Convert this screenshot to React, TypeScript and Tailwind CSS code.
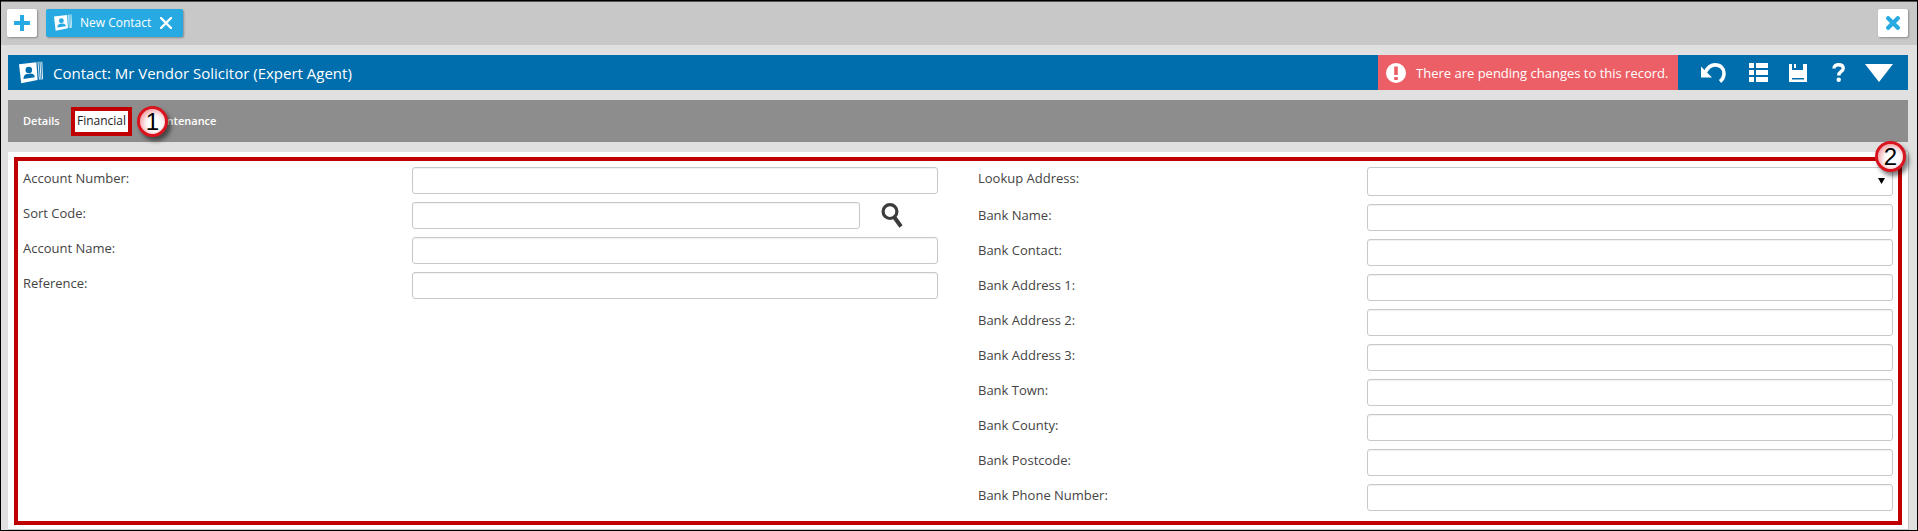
import React from 'react'

const leftFields = [
    { id: 'accountNumber', label: 'Account Number:' },
    { id: 'sortCode', label: 'Sort Code:', lookup: true },
    { id: 'accountName', label: 'Account Name:' },
    { id: 'reference', label: 'Reference:' },
]

const bankFields = [
    { id: 'bankName', label: 'Bank Name:' },
    { id: 'bankContact', label: 'Bank Contact:' },
    { id: 'bankAddress1', label: 'Bank Address 1:' },
    { id: 'bankAddress2', label: 'Bank Address 2:' },
    { id: 'bankAddress3', label: 'Bank Address 3:' },
    { id: 'bankTown', label: 'Bank Town:' },
    { id: 'bankCounty', label: 'Bank County:' },
    { id: 'bankPostcode', label: 'Bank Postcode:' },
    { id: 'bankPhone', label: 'Bank Phone Number:' },
]

const labelClass = 'w-[389px] shrink-0 pt-0.5'
const inputClass = 'h-[27px] min-w-0 flex-1 rounded-[3px] border border-[#c8c8c8] bg-white px-2 shadow-[inset_0_1px_1px_rgba(0,0,0,0.06)] focus:outline-none'

const ContactIcon: React.FC<{ className?: string }> = ({ className }) => (
    <svg viewBox="0 0 24 24" className={className} aria-hidden="true">
        <path d="M0 3.2 L17.4 1.2 L18.6 19 L2.2 22.2 Z" fill="#fff" />
        <path d="M19 0.8 L20.4 18.6 M21 0.6 L22 18.8 M22.8 0.8 L23.6 18.4" stroke="#fff" strokeWidth="0.9" fill="none" />
        <circle cx="9.8" cy="9" r="3.3" fill="currentColor" />
        <path d="M4.6 18 C4.4 14.5 6.2 13 8.6 13 L11.6 12.6 C14 12.6 15.6 14 15.8 16.2 Z" fill="currentColor" />
    </svg>
)

const Callout: React.FC<{ value: number }> = ({ value }) => (
    <span className="flex size-[31px] items-center justify-center rounded-full border-[3px] border-[#d9141e] bg-white font-['Liberation_Sans',sans-serif] text-2xl leading-none text-black shadow-[inset_2px_2px_6px_rgba(217,20,30,0.45),3px_4px_4px_rgba(0,0,0,0.5)]">
        {value}
    </span>
)

const App: React.FC = () => {
    return (
        <div className="border border-black bg-[#e0e0e0] font-['Open_Sans','Noto_Sans',sans-serif] text-[13px] leading-[18px] text-[#444]">
            <header className="flex items-center justify-between border-t border-[#555] bg-[#c8c8c8] pt-[7px] pr-[9px] pb-2 pl-1.5">
                <div className="flex items-center gap-[9px]">
                    <button type="button" aria-label="Add" className="flex h-7 w-[30px] items-center justify-center rounded-[2px] bg-white shadow-[1px_1px_2px_rgba(0,0,0,0.3)]">
                        <svg viewBox="0 0 16 16" className="size-4" aria-hidden="true">
                            <path d="M8 0 V16 M0 8 H16" stroke="#27aae1" strokeWidth="4" />
                        </svg>
                    </button>
                    <div className="flex h-7 w-[137px] items-center rounded-[2px] bg-[#27aae1] pl-2 text-white shadow-[1px_1px_2px_rgba(0,0,0,0.3)]">
                        <ContactIcon className="mr-2 size-[18px] text-[#27aae1]" />
                        <span className="flex-1 text-xs font-medium">New Contact</span>
                        <button type="button" aria-label="Close tab" className="mr-[11px]">
                            <svg viewBox="0 0 12 12" className="size-3" aria-hidden="true">
                                <path d="M1 1 L11 11 M11 1 L1 11" stroke="#fff" strokeWidth="2.4" strokeLinecap="round" />
                            </svg>
                        </button>
                    </div>
                </div>
                <button type="button" aria-label="Close" className="flex h-7 w-[30px] items-center justify-center rounded-[2px] bg-white shadow-[1px_1px_2px_rgba(0,0,0,0.3)]">
                    <svg viewBox="0 0 14 14" className="size-3.5" aria-hidden="true">
                        <path d="M2.2 2.2 L11.8 11.8 M11.8 2.2 L2.2 11.8" stroke="#27aae1" strokeWidth="4.2" strokeLinecap="round" />
                    </svg>
                </button>
            </header>

            <main className="flex flex-col gap-2.5 pt-2.5 pr-[9px] pl-[7px]">
                <div className="flex h-[35px] items-stretch bg-[#006dad] text-white">
                    <div className="flex flex-1 items-center pl-[11px]">
                        <ContactIcon className="mr-2.5 size-6 text-[#006dad]" />
                        <h1 className="text-[15px]">Contact: Mr Vendor Solicitor (Expert Agent)</h1>
                    </div>
                    <div className="flex w-[300px] items-center bg-[#ec5f66] pl-2">
                        <svg viewBox="0 0 20 20" className="mr-2.5 size-5" aria-hidden="true">
                            <circle cx="10" cy="10" r="10" fill="#fff" />
                            <path d="M8.2 3.5 H11.8 V12 H8.2 Z M8.2 14 H11.8 V17 H8.2 Z" fill="#ec5f66" />
                        </svg>
                        <span>There are pending changes to this record.</span>
                    </div>
                    <div className="flex w-[230px] items-center pl-[23px]">
                        <button type="button" aria-label="Undo" className="mr-[23px]">
                            <svg viewBox="0 0 25 20" className="h-5 w-[25px]" aria-hidden="true">
                                <path d="M0 3.5 L0 14.5 L11 14.5 Z" fill="#fff" />
                                <path d="M4.5 9 C7.5 3 11 1.9 14 1.9 C19.5 1.9 23 5.5 23 10.2 C23 14 21.5 16.5 19 18.5" fill="none" stroke="#fff" strokeWidth="3.6" />
                            </svg>
                        </button>
                        <button type="button" aria-label="List" className="mr-[21px]">
                            <svg viewBox="0 0 19 19" className="size-[19px]" aria-hidden="true">
                                <path d="M0 0 H5 V5 H0 Z M7 0 H19 V5 H7 Z M0 7 H5 V12 H0 Z M7 7 H19 V12 H7 Z M0 14 H5 V19 H0 Z M7 14 H19 V19 H7 Z" fill="#fff" />
                            </svg>
                        </button>
                        <button type="button" aria-label="Save" className="mr-[25px]">
                            <svg viewBox="0 0 18 18" className="size-[18px]" aria-hidden="true">
                                <path d="M0 0 H3 V6 H14 V0 H18 V18 H0 Z M5 0 H7 V4 H5 Z M3 14 V15.5 H15 V14 Z" fill="#fff" fillRule="evenodd" />
                            </svg>
                        </button>
                        <button type="button" aria-label="Help" className="mr-[20px]">
                            <svg viewBox="0 0 13 19" className="h-[19px] w-[13px]" aria-hidden="true">
                                <path d="M2 5.5 C2 3 4 1.8 6.5 1.8 C9.5 1.8 11.2 3.2 11.2 5.4 C11.2 8.6 6.8 8.2 6.8 12.4" fill="none" stroke="#fff" strokeWidth="3.4" />
                                <circle cx="6.7" cy="16.8" r="2.2" fill="#fff" />
                            </svg>
                        </button>
                        <button type="button" aria-label="More">
                            <svg viewBox="0 0 28 18" className="h-[18px] w-7" aria-hidden="true">
                                <path d="M0 0 H28 L14 18 Z" fill="#fff" />
                            </svg>
                        </button>
                    </div>
                </div>

                <nav className="flex h-[42px] items-center bg-[#8d8d8d] pl-[15px] text-xs text-white">
                    <a href="#details" className="w-12 text-[11px] font-semibold">Details</a>
                    <a href="#financial" className="flex h-[29px] w-[61px] items-center justify-center border-4 border-[#c00000] bg-white text-[#222]">Financial</a>
                    <div className="relative ml-[15px]">
                        <a href="#maintenance" className="text-[11px] font-semibold">Maintenance</a>
                        <div className="absolute -top-[7px] -left-[10px]">
                            <Callout value={1} />
                        </div>
                    </div>
                </nav>

                <section className="relative border-b border-[#c8c8c8] bg-white pt-[5px] pr-1.5 pb-1 pl-1.5 shadow-[1px_0_0_#c0c0c0]">
                    <form className="grid grid-cols-2 gap-10 border-4 border-[#c00000] pt-1.5 pr-[5px] pb-2.5 pl-[5px]">
                        <div className="flex flex-col gap-2">
                            {leftFields.map((field) => (
                                <div key={field.id} className="flex">
                                    <label htmlFor={field.id} className={labelClass}>{field.label}</label>
                                    <input type="text" id={field.id} name={field.id} className={inputClass} />
                                    {field.lookup && (
                                        <button type="button" aria-label="Search sort code" className="flex w-[78px] items-center pl-[21px]">
                                            <svg viewBox="0 0 22 25" className="h-[25px] w-[22px]" aria-hidden="true">
                                                <circle cx="9" cy="8.6" r="6.9" fill="none" stroke="#3c3c3c" strokeWidth="3.2" />
                                                <path d="M13.5 14.5 L20 23.5" stroke="#3c3c3c" strokeWidth="4" />
                                            </svg>
                                        </button>
                                    )}
                                </div>
                            ))}
                        </div>
                        <div className="flex flex-col gap-2">
                            <div className="flex">
                                <label htmlFor="lookupAddress" className={labelClass}>Lookup Address:</label>
                                <div className="relative flex flex-1">
                                    <select id="lookupAddress" name="lookupAddress" className="h-[29px] flex-1 appearance-none rounded-[3px] border border-[#c8c8c8] bg-white px-2 focus:outline-none">
                                        <option value=""></option>
                                    </select>
                                    <svg viewBox="0 0 7 6" className="pointer-events-none absolute right-2 bottom-3 h-1.5 w-[7px]" aria-hidden="true">
                                        <path d="M0 0 H7 L3.5 6 Z" fill="#000" />
                                    </svg>
                                </div>
                            </div>
                            {bankFields.map((field) => (
                                <div key={field.id} className="flex">
                                    <label htmlFor={field.id} className={labelClass}>{field.label}</label>
                                    <input type="text" id={field.id} name={field.id} className={inputClass} />
                                </div>
                            ))}
                        </div>
                    </form>
                    <div className="absolute -top-[11px] right-0.5">
                        <Callout value={2} />
                    </div>
                </section>
            </main>
        </div>
    )
}

export default App
